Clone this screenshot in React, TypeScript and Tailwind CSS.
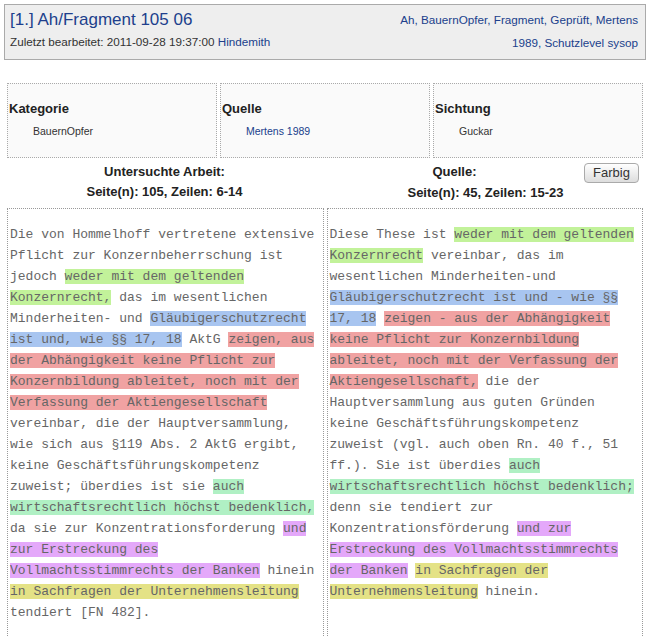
import React from 'react';

type Tone = 'g' | 'b' | 'r' | 'm' | 'p' | 'y' | '';
type Seg = [string, Tone?];

const tones: Record<string, string> = {
  g: 'bg-[#c2f29a]',
  b: 'bg-[#a8c5f0]',
  r: 'bg-[#f0a2a2]',
  m: 'bg-[#b0f0c4]',
  p: 'bg-[#e4a8fa]',
  y: 'bg-[#e4e286]',
};

const leftLines: Seg[][] = [
  [['Die von Hommelhoff vertretene extensive']],
  [['Pflicht zur Konzernbeherrschung ist']],
  [['jedoch '], ['weder mit dem geltenden', 'g']],
  [['Konzernrecht,', 'g'], [' das im wesentlichen']],
  [['Minderheiten- und '], ['Gläubigerschutzrecht', 'b']],
  [['ist und, wie §§ 17, 18', 'b'], [' AktG '], ['zeigen, aus', 'r']],
  [['der Abhängigkeit keine Pflicht zur', 'r']],
  [['Konzernbildung ableitet, noch mit der', 'r']],
  [['Verfassung der Aktiengesellschaft', 'r']],
  [['vereinbar, die der Hauptversammlung,']],
  [['wie sich aus §119 Abs. 2 AktG ergibt,']],
  [['keine Geschäftsführungskompetenz']],
  [['zuweist; überdies ist sie '], ['auch', 'm']],
  [['wirtschaftsrechtlich höchst bedenklich,', 'm']],
  [['da sie zur Konzentrationsforderung '], ['und', 'p']],
  [['zur Erstreckung des', 'p']],
  [['Vollmachtsstimmrechts der Banken', 'p'], [' hinein']],
  [['in Sachfragen der Unternehmensleitung', 'y']],
  [['tendiert [FN 482].']],
];

const rightLines: Seg[][] = [
  [['Diese These ist '], ['weder mit dem geltenden', 'g']],
  [['Konzernrecht', 'g'], [' vereinbar, das im']],
  [['wesentlichen Minderheiten-und']],
  [['Gläubigerschutzrecht ist und - wie §§', 'b']],
  [['17, 18', 'b'], [' '], ['zeigen - aus der Abhängigkeit', 'r']],
  [['keine Pflicht zur Konzernbildung', 'r']],
  [['ableitet, noch mit der Verfassung der', 'r']],
  [['Aktiengesellschaft,', 'r'], [' die der']],
  [['Hauptversammlung aus guten Gründen']],
  [['keine Geschäftsführungskompetenz']],
  [['zuweist (vgl. auch oben Rn. 40 f., 51']],
  [['ff.). Sie ist überdies '], ['auch', 'm']],
  [['wirtschaftsrechtlich höchst bedenklich;', 'm']],
  [['denn sie tendiert zur']],
  [['Konzentrationsförderung '], ['und zur', 'p']],
  [['Erstreckung des Vollmachtsstimmrechts', 'p']],
  [['der Banken', 'p'], [' '], ['in Sachfragen der', 'y']],
  [['Unternehmensleitung', 'y'], [' hinein.']],
];

const TextColumn: React.FC<{ lines: Seg[][] }> = ({ lines }) => (
  <div className="h-[450px] border border-dotted border-[#999] pl-[2px] pt-[15px] font-['Liberation_Mono','Courier_New',monospace] text-[13px] leading-[21px] text-[#666]">
    {lines.map((line, i) => (
      <div key={i} className="whitespace-pre">
        {line.map(([text, tone], j) =>
          tone ? (
            <span key={j} className={tones[tone]}>
              {text}
            </span>
          ) : (
            <span key={j}>{text}</span>
          )
        )}
      </div>
    ))}
  </div>
);

const InfoCell: React.FC<{ title: string; children: React.ReactNode }> = ({ title, children }) => (
  <div className="h-[75px] border border-dotted border-[#aaa] bg-[#fafafa] px-[1px] pt-[17px]">
    <div className="text-[13px] font-bold leading-[16px] text-[#222]">{title}</div>
    <div className="ml-[24px] mt-[7px] text-[10.5px] leading-[14px]">{children}</div>
  </div>
);

export default function App() {
  return (
    <div className="h-[636px] w-[650px] overflow-hidden bg-white pt-[4px] font-['Liberation_Sans',Arial,sans-serif]">
      {/* header */}
      <div className="mx-[4px] flex h-[56px] justify-between border border-[#aaa] bg-[#eee] pl-[5px] pr-[7px] pt-[4px]">
        <div>
          <div className="text-[17px] leading-[22px] text-[#203f8c]">[1.] Ah/Fragment 105 06</div>
          <div className="mt-[3px] text-[11.7px] leading-[16px] text-[#333]">
            Zuletzt bearbeitet: 2011-09-28 19:37:00 <span className="text-[#203f8c]">Hindemith</span>
          </div>
        </div>
        <div className="text-right text-[11.7px] text-[#203f8c]">
          <div className="leading-[22px]">Ah, BauernOpfer, Fragment, Geprüft, Mertens</div>
          <div className="mt-[4px] leading-[16px]">1989, Schutzlevel sysop</div>
        </div>
      </div>

      {/* info table */}
      <div className="mx-[7px] mt-[23px] grid grid-cols-3 gap-[3px]">
        <InfoCell title="Kategorie">
          <span className="text-[#333]">BauernOpfer</span>
        </InfoCell>
        <InfoCell title="Quelle">
          <span className="text-[#203f8c]">Mertens 1989</span>
        </InfoCell>
        <InfoCell title="Sichtung">
          <span className="text-[#333]">Guckar</span>
        </InfoCell>
      </div>

      {/* column headers */}
      <div className="mx-[4px] mt-[4px] grid grid-cols-2 text-[13px] font-bold leading-[20px] text-[#222]">
        <div className="text-center">
          <div>Untersuchte Arbeit:</div>
          <div>Seite(n): 105, Zeilen: 6-14</div>
        </div>
        <div className="text-center">
          <div className="flex items-start">
            <div className="flex-1">Quelle:</div>
            <button className="mr-[7px] mt-[1px] h-[20px] w-[55px] rounded-[4px] border border-[#aaa] bg-gradient-to-b from-white to-[#ddd] text-[13px] font-normal leading-[18px] text-[#333]">
              Farbig
            </button>
          </div>
          <div>Seite(n): 45, Zeilen: 15-23</div>
        </div>
      </div>

      {/* compared texts */}
      <div className="mx-[7px] mt-[5px] grid grid-cols-2 gap-[3px]">
        <TextColumn lines={leftLines} />
        <TextColumn lines={rightLines} />
      </div>
    </div>
  );
}
